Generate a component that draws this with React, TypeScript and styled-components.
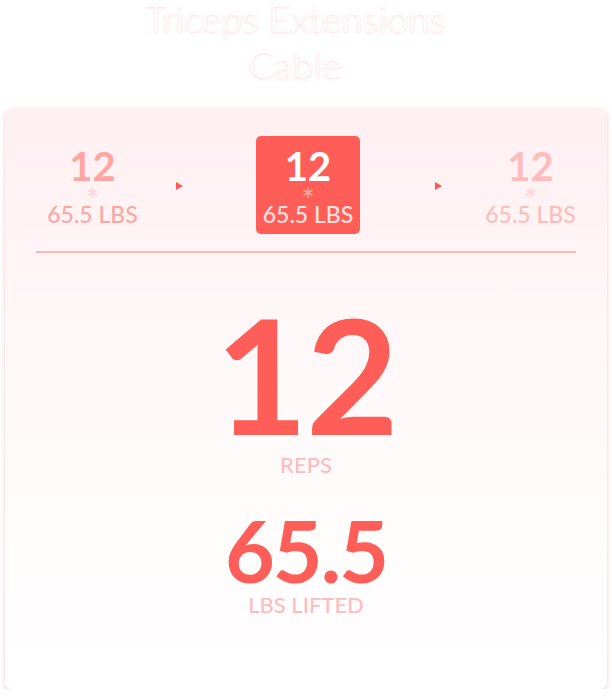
import { Fragment } from "react";
import styled, { createGlobalStyle } from "styled-components";

const GlobalStyle = createGlobalStyle`
  html, body {
    margin: 0;
    padding: 0;
    background: #ffffff;
  }
  body {
    font-family: Lato, "Open Sans", sans-serif;
  }
`;

const Page = styled.div`
  width: 612px;
  padding: 0 5px;
  box-sizing: border-box;
  display: flex;
  flex-direction: column;
`;

const Title = styled.h1`
  margin: 0;
  padding-right: 22px;
  display: flex;
  flex-direction: column;
  align-items: center;
  gap: 12px;
  font-size: 38px;
  line-height: 34px;
  font-weight: 300;
  color: #ffffff;
  text-shadow: 0 1px 3px rgba(240, 160, 175, 0.5);
`;

const Card = styled.section`
  margin-top: 28px;
  height: 581px;
  box-sizing: border-box;
  padding: 28px 31px 0;
  border-radius: 7px;
  background: linear-gradient(180deg, #fff0f2 0%, #fffafa 55%, #ffffff 100%);
  box-shadow: 0 2px 5px rgba(225, 140, 155, 0.45);
  display: flex;
  flex-direction: column;
  align-items: center;
`;

const SetRow = styled.div`
  align-self: stretch;
  display: grid;
  grid-template-columns: 113px 60px 198px 62px 123px;
  align-items: center;
  justify-items: center;
`;

const SetItem = styled.div<{ $tone: "done" | "active" | "next" }>`
  display: flex;
  flex-direction: column;
  align-items: center;
  padding: 10px 7px 6px;
  border-radius: 5px;
  background: ${(p) => (p.$tone === "active" ? "#ff5d57" : "transparent")};
  color: ${(p) =>
    p.$tone === "active" ? "#ffffff" : p.$tone === "done" ? "#ffa6a3" : "#ffbcbc"};
`;

const SetReps = styled.div`
  font-size: 40px;
  line-height: 40px;
  font-weight: 700;
`;

const Star = styled.div<{ $active?: boolean }>`
  height: 14px;
  font-size: 32px;
  line-height: 28px;
  font-weight: 400;
  color: ${(p) => (p.$active ? "#ffaaa6" : "#ffd3d6")};
`;

const SetWeight = styled.div<{ $active?: boolean }>`
  font-size: 23px;
  line-height: 28px;
  font-weight: 500;
  color: ${(p) => (p.$active ? "#ffe3e3" : "inherit")};
`;

const Arrow = styled.div`
  width: 0;
  height: 0;
  margin-top: 2px;
  border-top: 4px solid transparent;
  border-bottom: 4px solid transparent;
  border-left: 7px solid #ff5a55;
`;

const Divider = styled.hr`
  align-self: stretch;
  margin: 17px 0 0;
  border: 0;
  height: 2px;
  background: #ffb8b8;
`;

const BigValue = styled.div<{ $size: number }>`
  font-size: ${(p) => p.$size}px;
  line-height: 1;
  font-weight: 700;
  color: #ff5d57;
  letter-spacing: -2px;
`;

const Caption = styled.div`
  margin-top: -1px;
  font-size: 22px;
  line-height: 26px;
  font-weight: 500;
  color: #ffbcc0;
`;

const Stat = styled.div<{ $top: number }>`
  margin-top: ${(p) => p.$top}px;
  display: flex;
  flex-direction: column;
  align-items: center;
`;

const sets = [
  { reps: 12, weight: "65.5 LBS", tone: "done" as const },
  { reps: 12, weight: "65.5 LBS", tone: "active" as const },
  { reps: 12, weight: "65.5 LBS", tone: "next" as const },
];

export default function App() {
  return (
    <>
      <GlobalStyle />
      <Page>
        <Title>
          <span>Triceps Extensions</span>
          <span>Cable</span>
        </Title>
        <Card>
          <SetRow>
            {sets.map((s, i) => (
              <Fragment key={i}>
                {i > 0 && <Arrow />}
                <SetItem $tone={s.tone}>
                  <SetReps>{s.reps}</SetReps>
                  <Star $active={s.tone === "active"}>*</Star>
                  <SetWeight $active={s.tone === "active"}>{s.weight}</SetWeight>
                </SetItem>
              </Fragment>
            ))}
          </SetRow>
          <Divider />
          <Stat $top={40}>
            <BigValue $size={160}>12</BigValue>
            <Caption>REPS</Caption>
          </Stat>
          <Stat $top={29}>
            <BigValue $size={86}>65.5</BigValue>
            <Caption>LBS LIFTED</Caption>
          </Stat>
        </Card>
      </Page>
    </>
  );
}
